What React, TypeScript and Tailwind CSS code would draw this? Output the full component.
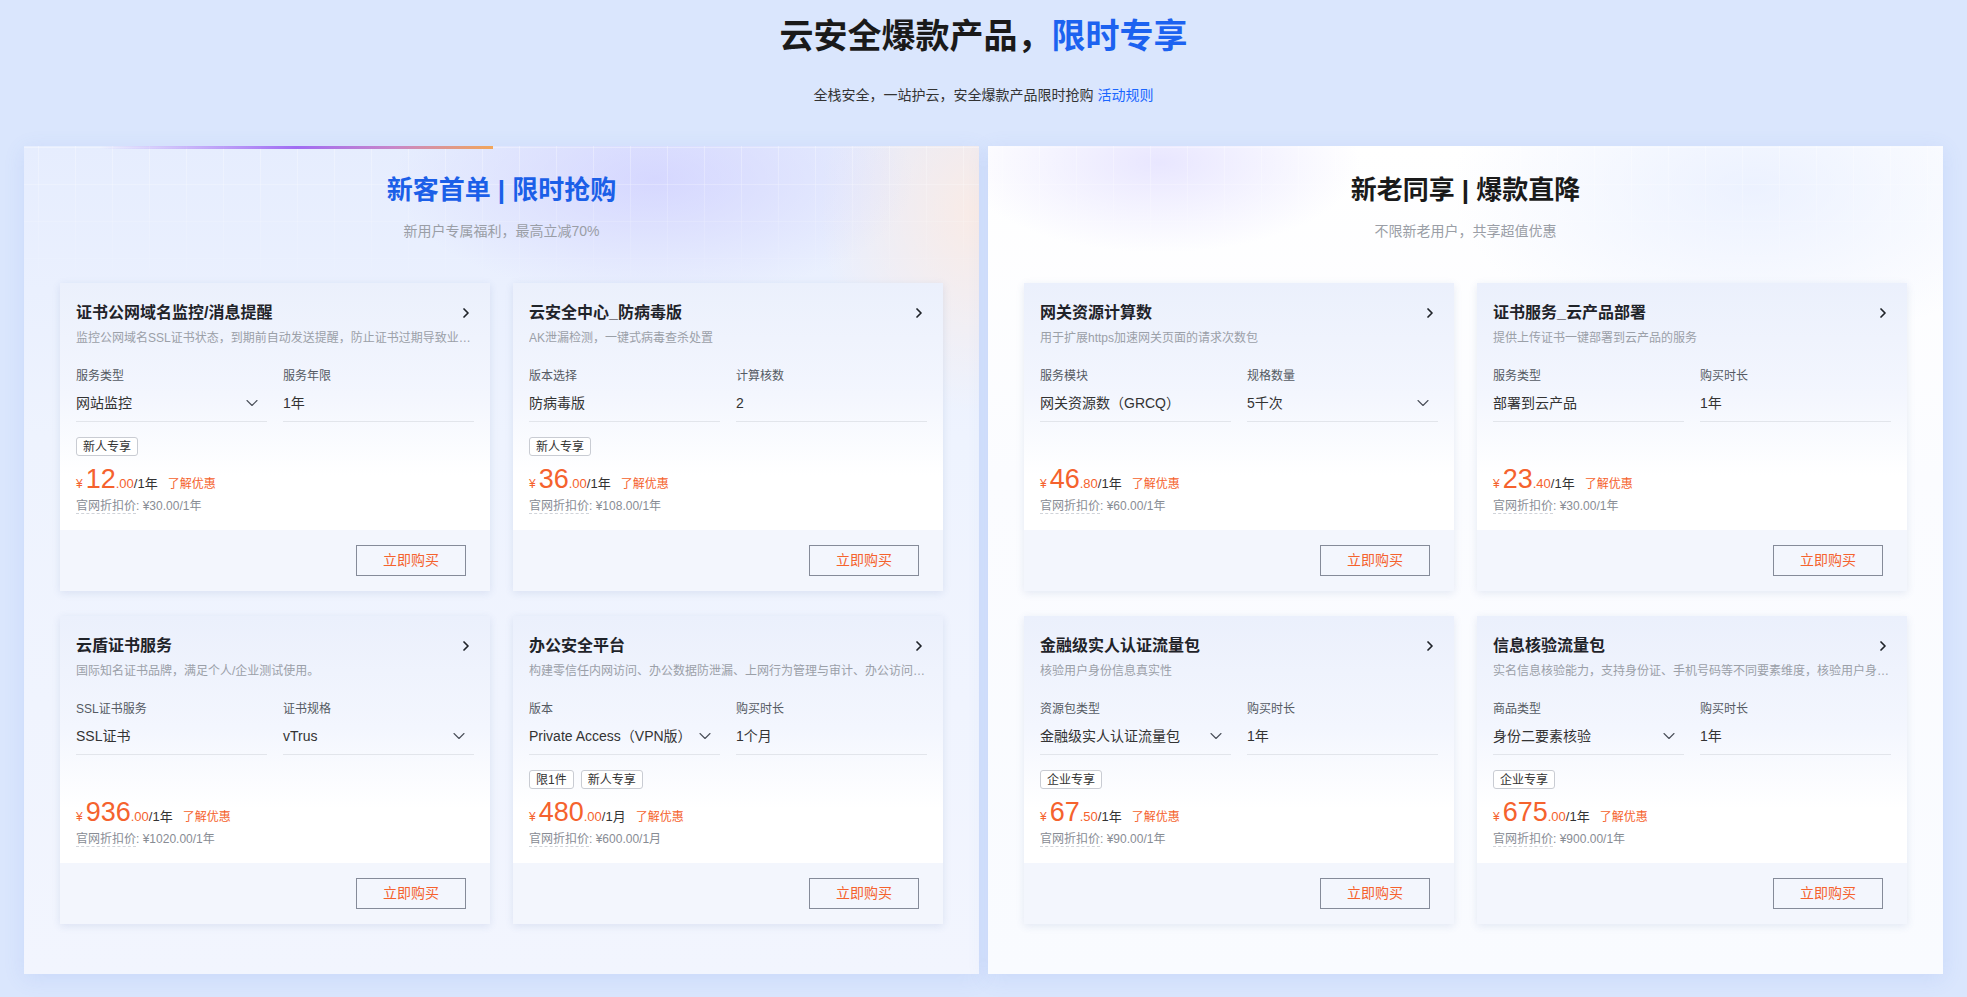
import React from "react";
import { ChevronRight, ChevronDown } from "lucide-react";

type Field = { label: string; value: string; dropdown?: boolean };
type CardData = {
  title: string;
  desc: string;
  fields: Field[];
  tags: string[];
  int: string;
  dec: string;
  unit: string;
  orig: string;
};

const leftCards: CardData[] = [
  {
    title: "证书公网域名监控/消息提醒",
    desc: "监控公网域名SSL证书状态，到期前自动发送提醒，防止证书过期导致业务中断",
    fields: [
      { label: "服务类型", value: "网站监控", dropdown: true },
      { label: "服务年限", value: "1年" },
    ],
    tags: ["新人专享"],
    int: "12",
    dec: ".00",
    unit: "/1年",
    orig: "¥30.00/1年",
  },
  {
    title: "云安全中心_防病毒版",
    desc: "AK泄漏检测，一键式病毒查杀处置",
    fields: [
      { label: "版本选择", value: "防病毒版" },
      { label: "计算核数", value: "2" },
    ],
    tags: ["新人专享"],
    int: "36",
    dec: ".00",
    unit: "/1年",
    orig: "¥108.00/1年",
  },
  {
    title: "云盾证书服务",
    desc: "国际知名证书品牌，满足个人/企业测试使用。",
    fields: [
      { label: "SSL证书服务", value: "SSL证书" },
      { label: "证书规格", value: "vTrus", dropdown: true },
    ],
    tags: [],
    int: "936",
    dec: ".00",
    unit: "/1年",
    orig: "¥1020.00/1年",
  },
  {
    title: "办公安全平台",
    desc: "构建零信任内网访问、办公数据防泄漏、上网行为管理与审计、办公访问安全等一站式办公安全能力",
    fields: [
      { label: "版本", value: "Private Access（VPN版）", dropdown: true },
      { label: "购买时长", value: "1个月" },
    ],
    tags: ["限1件", "新人专享"],
    int: "480",
    dec: ".00",
    unit: "/1月",
    orig: "¥600.00/1月",
  },
];

const rightCards: CardData[] = [
  {
    title: "网关资源计算数",
    desc: "用于扩展https加速网关页面的请求次数包",
    fields: [
      { label: "服务模块", value: "网关资源数（GRCQ）" },
      { label: "规格数量", value: "5千次", dropdown: true },
    ],
    tags: [],
    int: "46",
    dec: ".80",
    unit: "/1年",
    orig: "¥60.00/1年",
  },
  {
    title: "证书服务_云产品部署",
    desc: "提供上传证书一键部署到云产品的服务",
    fields: [
      { label: "服务类型", value: "部署到云产品" },
      { label: "购买时长", value: "1年" },
    ],
    tags: [],
    int: "23",
    dec: ".40",
    unit: "/1年",
    orig: "¥30.00/1年",
  },
  {
    title: "金融级实人认证流量包",
    desc: "核验用户身份信息真实性",
    fields: [
      { label: "资源包类型", value: "金融级实人认证流量包", dropdown: true },
      { label: "购买时长", value: "1年" },
    ],
    tags: ["企业专享"],
    int: "67",
    dec: ".50",
    unit: "/1年",
    orig: "¥90.00/1年",
  },
  {
    title: "信息核验流量包",
    desc: "实名信息核验能力，支持身份证、手机号码等不同要素维度，核验用户身份信息真实性",
    fields: [
      { label: "商品类型", value: "身份二要素核验", dropdown: true },
      { label: "购买时长", value: "1年" },
    ],
    tags: ["企业专享"],
    int: "675",
    dec: ".00",
    unit: "/1年",
    orig: "¥900.00/1年",
  },
];

function Card({ c }: { c: CardData }) {
  return (
    <div className="flex h-[308px] flex-col overflow-hidden bg-white shadow-[0_2px_8px_rgba(60,90,160,0.12)]">
      <div className="flex-1 px-4 pt-[18px] [background-image:linear-gradient(180deg,#ebf0fc_0%,#f3f6fe_45%,#ffffff_78%)]">
        <div className="flex h-6 items-center justify-between">
          <h3 className="text-[16px] font-bold leading-6 text-[#1f2329]">{c.title}</h3>
          <ChevronRight size={16} strokeWidth={2.6} className="text-[#1f2329]" />
        </div>
        <p className="mt-1 truncate text-[12px] leading-[18px] text-[#9ba0a8]">{c.desc}</p>
        <div className="mt-5 grid grid-cols-2 gap-4">
          {c.fields.map((f) => (
            <div key={f.label}>
              <div className="text-[12px] leading-[18px] text-[#555a63]">{f.label}</div>
              <div className="flex h-[37px] items-center justify-between border-b border-[#e2e5eb]">
                <span className="text-[14px] text-[#333]">{f.value}</span>
                {f.dropdown && (
                  <ChevronDown size={20} strokeWidth={1.3} className="mr-[5px] text-[#4a4f58]" />
                )}
              </div>
            </div>
          ))}
        </div>
        <div className="mt-[15px] flex h-[19px] gap-[7px]">
          {c.tags.map((t) => (
            <span
              key={t}
              className="flex h-[19px] items-center rounded-[3px] border border-[#c9ccd3] bg-white px-[6px] text-[12px] leading-none text-[#333]"
            >
              {t}
            </span>
          ))}
        </div>
        <div className="mt-[9px] flex h-[29px] items-baseline leading-[29px]">
          <span className="text-[12px] text-[#f5622d]">¥</span>
          <span className="ml-[3px] text-[27px] text-[#f5622d]">{c.int}</span>
          <span className="text-[13px] text-[#f5622d]">{c.dec}</span>
          <span className="text-[13px] text-[#333]">{c.unit}</span>
          <span className="ml-[10px] text-[12px] text-[#f5622d]">了解优惠</span>
        </div>
        <div className="mt-[3px] text-[12px] leading-[18px] text-[#888c94]">
          <span className="border-b border-dashed border-[#d0d3d9]">官网折扣价</span>
          <span>: {c.orig}</span>
        </div>
      </div>
      <div className="flex h-[61px] items-center justify-end bg-[#f3f6fd] pr-[24px]">
        <button className="h-[31px] w-[110px] border border-[#858b99] bg-transparent text-[14px] text-[#f5622d]">
          立即购买
        </button>
      </div>
    </div>
  );
}

function Panel({
  title,
  subtitle,
  cards,
  left,
}: {
  title: string;
  subtitle: string;
  cards: CardData[];
  left: boolean;
}) {
  return (
    <div
      className={
        left
          ? "relative overflow-hidden px-[36px] pb-[50px] shadow-[0_4px_20px_rgba(80,120,220,0.12)] [background-image:radial-gradient(ellipse_260px_120px_at_66%_4%,rgba(208,208,255,0.75),transparent),radial-gradient(ellipse_160px_200px_at_100%_8%,rgba(255,234,222,0.75),transparent),linear-gradient(180deg,#e6edfe_0%,#eef3fe_35%,#f2f5fe_100%)]"
          : "relative overflow-hidden px-[36px] pb-[50px] shadow-[0_4px_20px_rgba(80,120,220,0.12)] [background-image:radial-gradient(ellipse_200px_90px_at_18%_2%,rgba(225,222,255,0.75),transparent),radial-gradient(ellipse_300px_160px_at_80%_5%,rgba(228,236,255,0.7),transparent),linear-gradient(180deg,#ffffff_0%,#fbfcff_40%,#f9fbff_100%)]"
      }
    >
      <div className="pointer-events-none absolute inset-x-0 top-0 h-[150px] [background-image:linear-gradient(90deg,rgba(255,255,255,0.4)_1px,transparent_1px),linear-gradient(180deg,rgba(255,255,255,0.4)_1px,transparent_1px)] [background-size:37px_37px] [background-position:14px_1px] [mask-image:linear-gradient(180deg,rgba(0,0,0,0.8),transparent)]" />
      {left && (
        <div className="absolute left-[76px] top-0 h-[3px] w-[393px] [background-image:linear-gradient(90deg,rgba(180,150,250,0)_0%,#a06cf3_50%,#c886c8_75%,#f2a65a_100%)]" />
      )}
      <div className="relative pt-[26px] text-center">
        <h2
          className={
            left
              ? "text-[26px] font-bold leading-[36px] text-[#1b5fe8]"
              : "text-[26px] font-bold leading-[36px] text-[#1a1a1a]"
          }
        >
          {title}
        </h2>
        <p className="mt-[13px] text-[14px] leading-[20px] text-[#9a9ea6]">{subtitle}</p>
      </div>
      <div className="relative mt-[42px] grid grid-cols-2 gap-x-[23px] gap-y-[25px]">
        {cards.map((c) => (
          <Card key={c.title} c={c} />
        ))}
      </div>
    </div>
  );
}

export default function App() {
  return (
    <div className="min-h-screen w-full bg-[#dae6fd] [font-family:'Liberation_Sans','Noto_Sans_CJK_SC',sans-serif]">
      <div className="pt-[14px] text-center">
        <h1 className="text-[34px] font-bold leading-[44px] text-[#1a1a1a]">
          云安全爆款产品，<span className="text-[#1c62f0]">限时专享</span>
        </h1>
        <p className="mt-[26px] text-[14px] leading-[22px] text-[#333]">
          全栈安全，一站护云，安全爆款产品限时抢购 <span className="text-[#1a66ff]">活动规则</span>
        </p>
      </div>
      <div className="mt-[40px] grid grid-cols-2 gap-[9px] px-[24px] pb-[23px]">
        <Panel
          left
          title="新客首单 | 限时抢购"
          subtitle="新用户专属福利，最高立减70%"
          cards={leftCards}
        />
        <Panel
          left={false}
          title="新老同享 | 爆款直降"
          subtitle="不限新老用户，共享超值优惠"
          cards={rightCards}
        />
      </div>
    </div>
  );
}
